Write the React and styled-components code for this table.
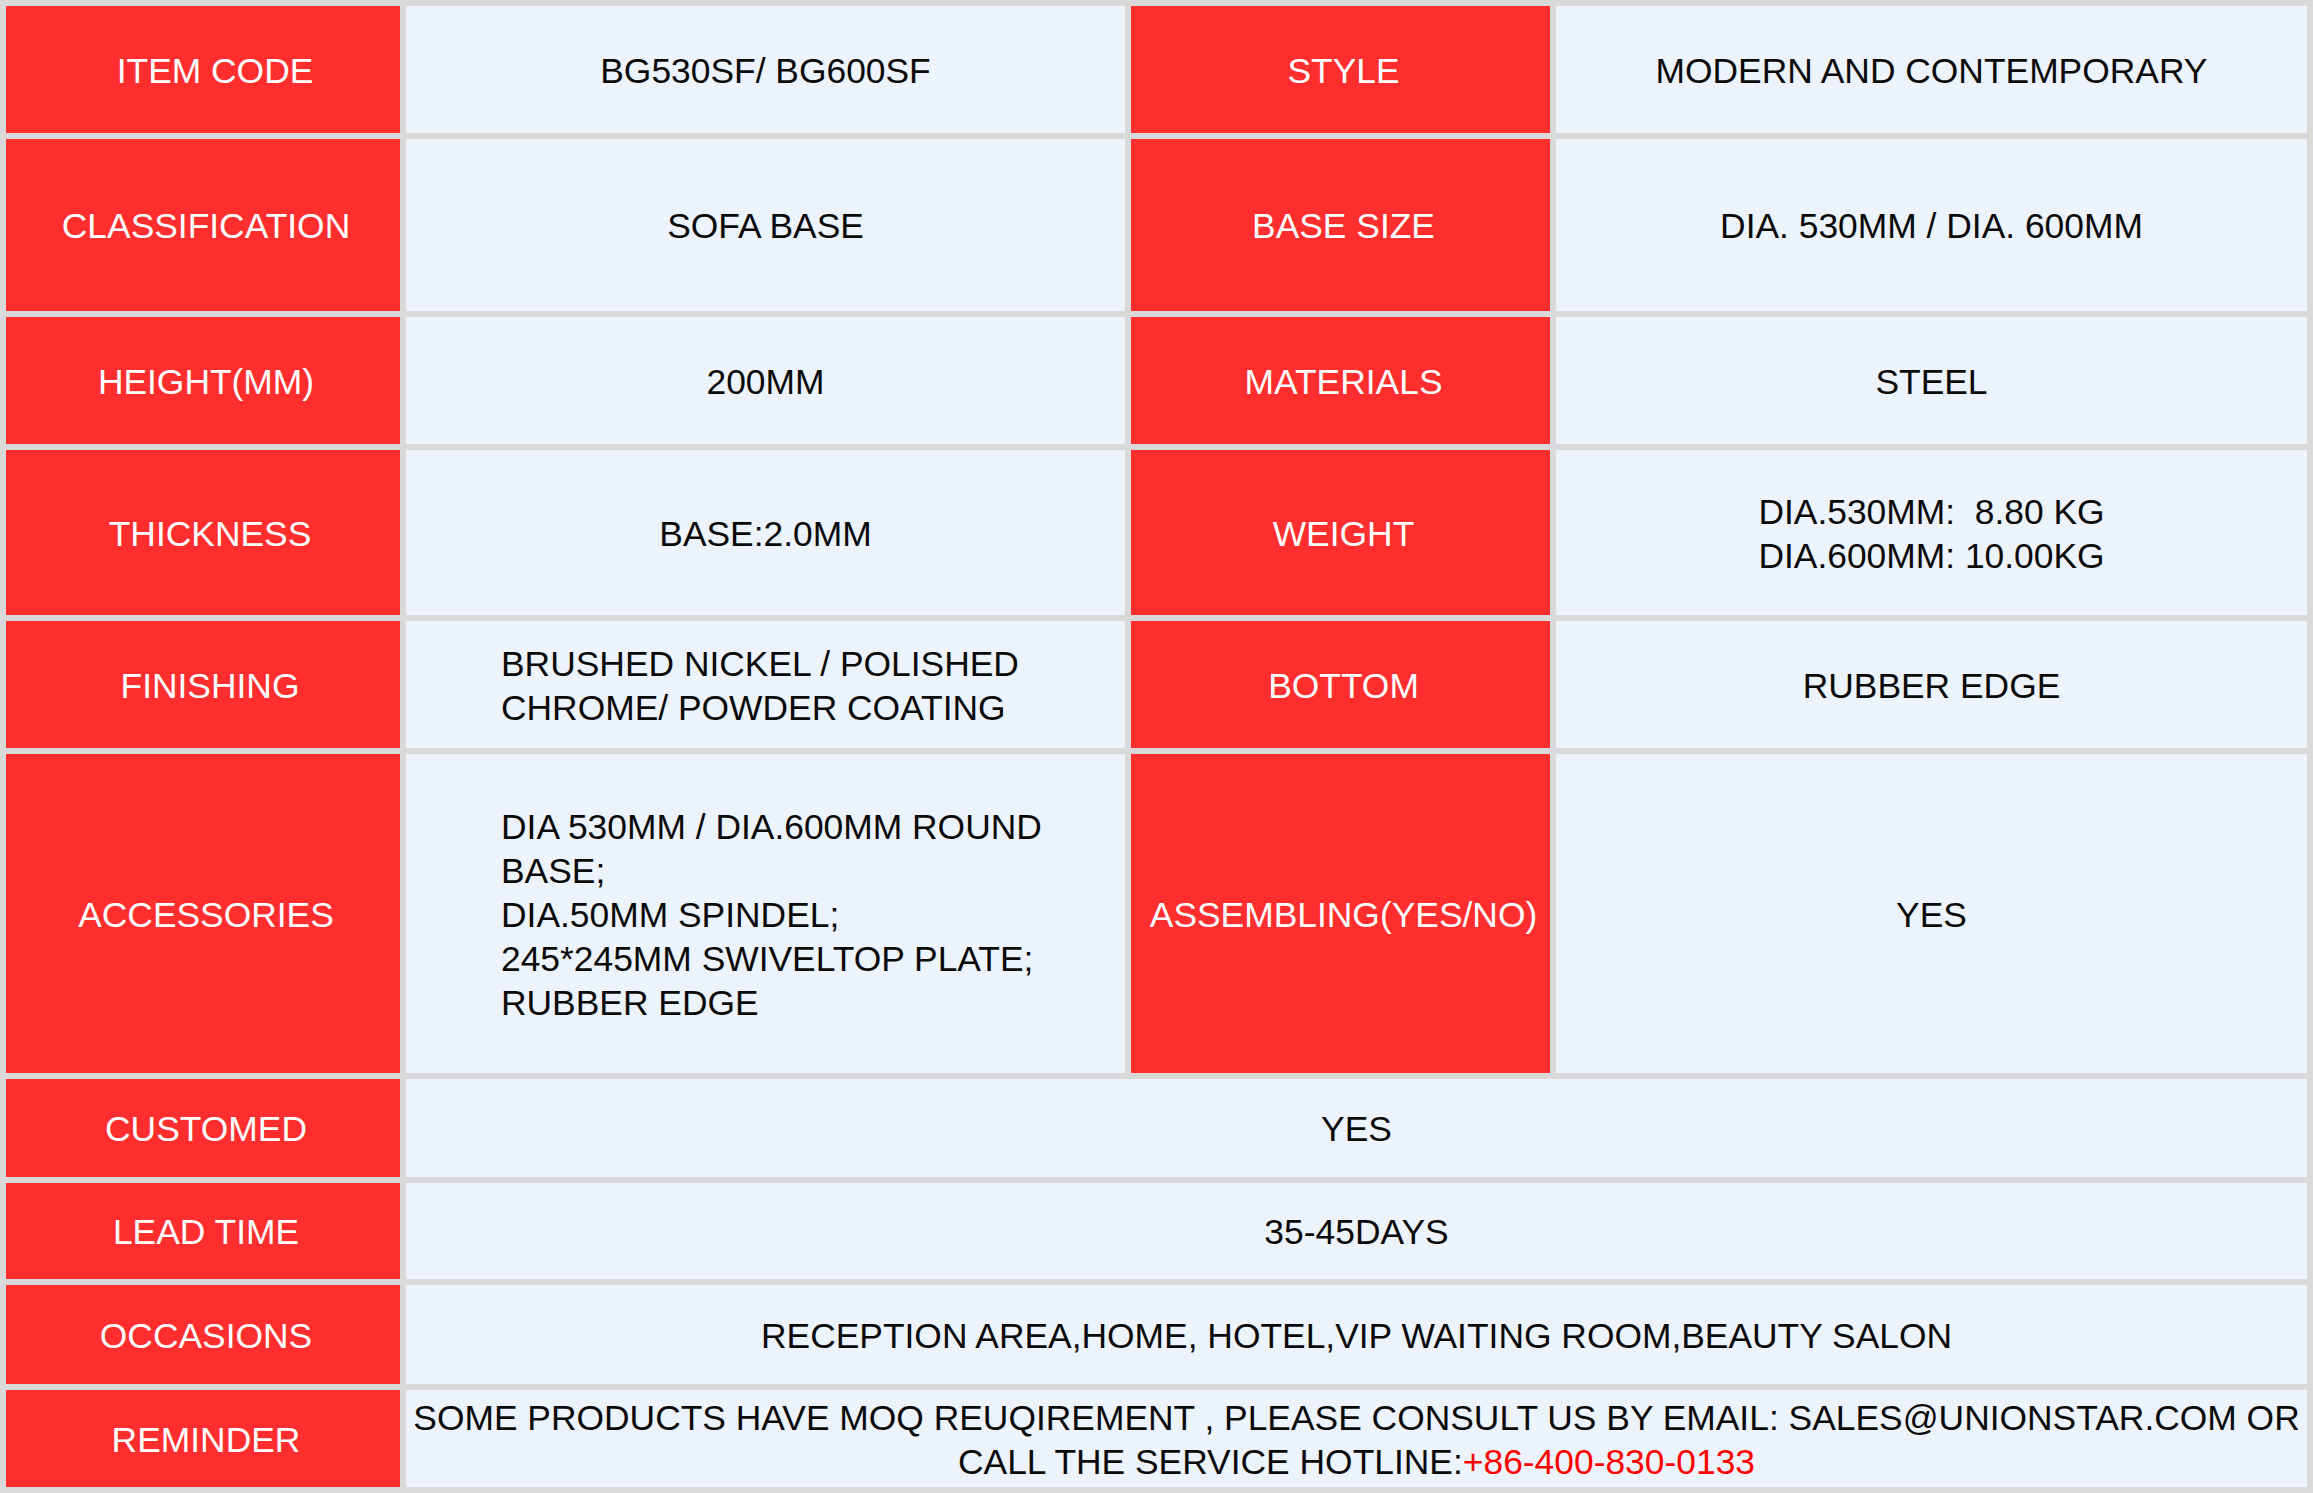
import React from 'react';
import styled, { createGlobalStyle } from 'styled-components';

const Global = createGlobalStyle`
  html, body { margin: 0; padding: 0; background: #d9d9d9; }
  body { font-family: "Liberation Sans", Arial, sans-serif; }
`;

const Table = styled.div`
  box-sizing: border-box;
  width: 2313px;
  height: 1493px;
  padding: 6px;
  background: #d9d9d9;
  display: grid;
  grid-template-columns: 394px 719px 419px 751px;
  grid-template-rows: 127px 172px 127px 165px 127px 319px 98px 96px 99px 97px;
  gap: 6px;
  font-family: "Liberation Sans", Arial, sans-serif;
  font-size: 35.4px;
  line-height: 44px;
`;

const Cell = styled.div`
  box-sizing: border-box;
  display: flex;
  align-items: center;
  justify-content: center;
  text-align: center;
  white-space: nowrap;
  min-width: 0;
  padding-top: 2px;
`;

const Label = styled(Cell)`
  background: #ff2e2e;
  color: #ffffff;
  padding-left: ${p => (p.$shift ? p.$shift : 6)}px;
`;

const Value = styled(Cell)`
  background: #ecf3fa;
  color: #0a0a0a;
  grid-column: ${p => (p.$wide ? 'span 3' : 'auto')};
  ${p => p.$indent && `
    justify-content: flex-start;
    text-align: left;
    padding-left: ${p.$indent}px;
  `}
`;

const Text = styled.span`
  display: block;
`;

const Hotline = styled.span`
  color: #ff0000;
`;

const rows = [
  ['ITEM CODE', 'BG530SF/ BG600SF', 'STYLE', 'MODERN AND CONTEMPORARY', 24],
  ['CLASSIFICATION', 'SOFA BASE', 'BASE SIZE', 'DIA. 530MM / DIA. 600MM'],
  ['HEIGHT(MM)', '200MM', 'MATERIALS', 'STEEL'],
  ['THICKNESS', 'BASE:2.0MM', 'WEIGHT', (
    <>DIA.530MM:{'\u00a0\u00a0'}8.80 KG<br />DIA.600MM: 10.00KG</>
  ), 14],
  ['FINISHING', (
    <>BRUSHED NICKEL / POLISHED<br />CHROME/ POWDER COATING</>
  ), 'BOTTOM', 'RUBBER EDGE', 14, 95],
  ['ACCESSORIES', (
    <>DIA 530MM / DIA.600MM ROUND<br />BASE;<br />DIA.50MM SPINDEL;<br />245*245MM SWIVELTOP PLATE;<br />RUBBER EDGE</>
  ), 'ASSEMBLING(YES/NO)', 'YES', 6, 95],
];

const wideRows = [
  ['CUSTOMED', 'YES'],
  ['LEAD TIME', '35-45DAYS'],
  ['OCCASIONS', 'RECEPTION AREA,HOME, HOTEL,VIP WAITING ROOM,BEAUTY SALON'],
  ['REMINDER', (
    <>SOME PRODUCTS HAVE MOQ REUQIREMENT , PLEASE CONSULT US BY EMAIL: SALES@UNIONSTAR.COM OR<br />CALL THE SERVICE HOTLINE:<Hotline>+86-400-830-0133</Hotline></>
  )],
];

export default function App() {
  return (
    <>
      <Global />
      <Table>
        {rows.map(([l1, v1, l2, v2, shift, indent], i) => (
          <React.Fragment key={i}>
            <Label $shift={shift}><Text>{l1}</Text></Label>
            <Value $indent={indent}><Text>{v1}</Text></Value>
            <Label><Text>{l2}</Text></Label>
            <Value><Text>{v2}</Text></Value>
          </React.Fragment>
        ))}
        {wideRows.map(([l, v], i) => (
          <React.Fragment key={'w' + i}>
            <Label><Text>{l}</Text></Label>
            <Value $wide><Text>{v}</Text></Value>
          </React.Fragment>
        ))}
      </Table>
    </>
  );
}
